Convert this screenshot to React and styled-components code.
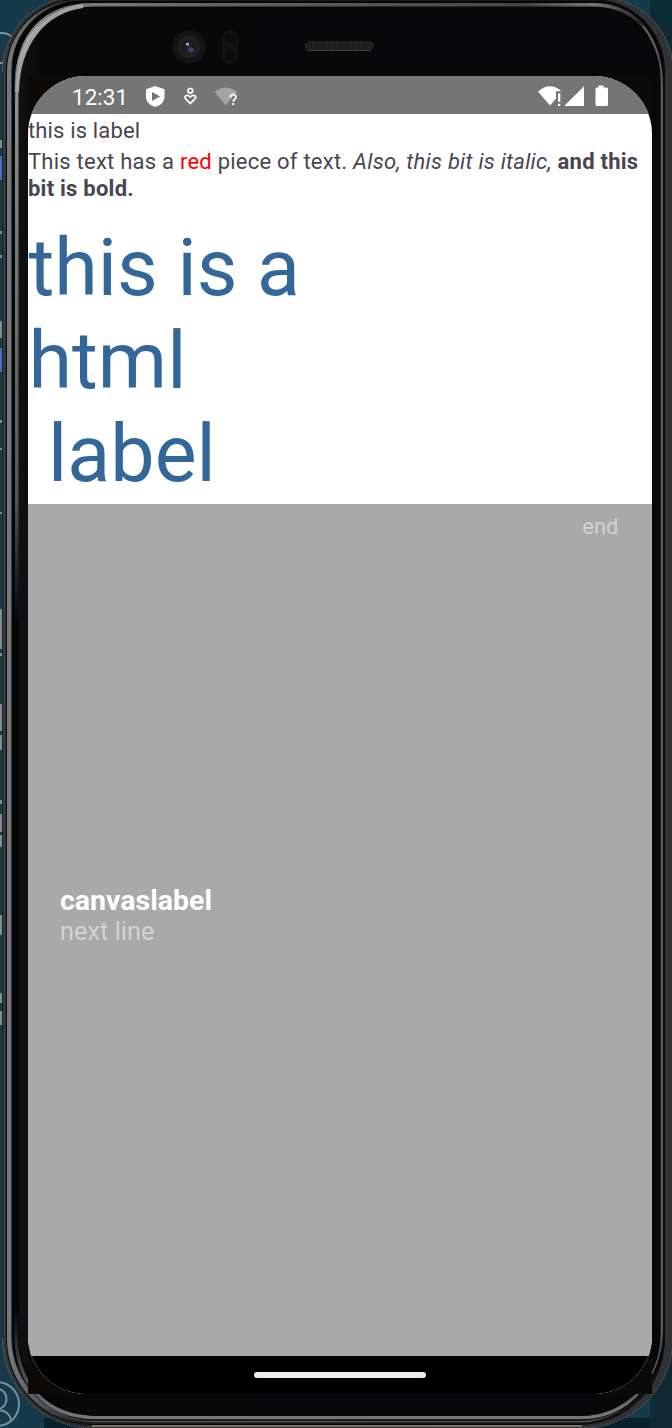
import React from "react";
import styled, { createGlobalStyle } from "styled-components";

const Global = createGlobalStyle`
  * { box-sizing: border-box; }
  body { margin: 0; background: #163a49; font-family: Roboto, sans-serif; }
`;

const Stage = styled.main`
  position: relative;
  width: 672px;
  height: 1428px;
  padding: 76px 20px 34px 28px;
  overflow: hidden;
`;

const Shell = styled.svg`
  position: absolute;
  inset: 0;
`;

const Screen = styled.section`
  position: relative;
  display: flex;
  flex-direction: column;
  height: 1318px;
  border-radius: 58px;
  overflow: hidden;
  background: #fff;
`;

const StatusBar = styled.header`
  display: flex;
  justify-content: space-between;
  height: 38px;
  flex: none;
  background: #757575;
  color: #fff;
`;

const Clock = styled.span`
  width: 73px;
  font-size: 22.5px;
  line-height: 43px;
`;

const StatusLeft = styled.div`
  display: flex;
  padding-left: 44px;
`;

const Labels = styled.div`
  height: 390px;
  flex: none;
  color: #49454f;
`;

const Label = styled.p`
  margin: 0;
  white-space: nowrap;
  font-size: 22px;
  line-height: ${(p) => p.$line}px;
  letter-spacing: ${(p) => p.$track}px;
  padding-top: ${(p) => p.$top}px;
`;

const Red = styled.span`
  color: #f00;
`;

const Heading = styled.div`
  padding: 20px 0 0 0.5px;
  color: #336699;
  font-size: 79px;
  line-height: 93px;
  white-space: pre;
`;

const Canvas = styled.div`
  flex: 1;
  display: flex;
  flex-direction: column;
  background: #a9a9a9;
  color: #d3d3d3;
`;

const EndText = styled.span`
  align-self: flex-end;
  margin: 10px 33.5px 0 0;
  font-size: 22px;
  line-height: 26px;
`;

const CanvasLabel = styled.div`
  margin: 344px 0 0 32px;
  font-size: 25.4px;
  line-height: 29px;
`;

const Title = styled.strong`
  display: block;
  color: #fff;
  font-size: 28.5px;
  line-height: 33px;
`;

const NavBar = styled.footer`
  display: flex;
  justify-content: center;
  align-items: center;
  height: 38px;
  flex: none;
  background: #000;
`;

const Handle = styled.i`
  width: 172px;
  height: 6px;
  border-radius: 3px;
  background: #ececec;
`;

// Closed outline with separate radii for the top and bottom corners.
const outline = (l, t, r, b, top, bottom) =>
  `M${l + top} ${t}H${r - top}A${top} ${top} 0 0 1 ${r} ${t + top}V${b - bottom}A${bottom} ${bottom} 0 0 1 ${r - bottom} ${b}H${l + bottom}A${bottom} ${bottom} 0 0 1 ${l} ${b - bottom}V${t + top}A${top} ${top} 0 0 1 ${l + top} ${t}Z`;

function Surroundings() {
  return (
    <g>
      <rect width="672" height="1428" fill="#163a49" />
      <rect x="650" width="22" height="26" fill="#0b2b36" />
      <rect x="650" y="26" width="22" height="1402" fill="#102a34" />
      <rect x="44" y="1418" width="606" height="10" fill="#0a202b" />
      <g fill="none" stroke="#77929c" strokeWidth="2">
        <circle cx="2" cy="48" r="15" />
        <circle cx="-3" cy="1404" r="22" />
        <circle cx="-4" cy="1399" r="10.5" />
        <path d="M-3 1410Q9 1410 11 1420" />
      </g>
      <g fill="#77929c">
        {[[140, 8], [231, 3], [255, 3], [321, 17], [420, 3], [448, 2], [512, 2], [609, 40], [653, 3], [704, 27], [735, 15], [800, 4], [814, 18], [835, 12], [915, 20], [993, 10], [1011, 14]].map(([y, h]) => (
          <rect key={y} y={y} width="2" height={h} />
        ))}
      </g>
      <path d="M0 156h2v24H0zM0 348h2v24H0z" fill="#3974c4" />
    </g>
  );
}

function PhoneShell() {
  return (
    <Shell width="672" height="1428" viewBox="0 0 672 1428">
      <defs>
        <linearGradient id="outer" x1="0" x2="1">
          <stop offset="0" stopColor="#353535" />
          <stop offset=".08" stopColor="#292929" />
          <stop offset="1" stopColor="#303233" />
        </linearGradient>
        <linearGradient id="silver" x1="0" y1="0" x2="1" y2="0">
          <stop offset="0" stopColor="#777a80" />
          <stop offset=".03" stopColor="#62666a" />
          <stop offset=".11" stopColor="#1c1d1e" />
          <stop offset="1" stopColor="#141516" />
        </linearGradient>
        <linearGradient id="rim" gradientUnits="userSpaceOnUse" x1="0" y1="0" x2="0" y2="620">
          <stop offset="0" stopColor="#777" />
          <stop offset=".06" stopColor="#b4b4b4" />
          <stop offset=".16" stopColor="#909191" />
          <stop offset=".5" stopColor="#6e706d" />
          <stop offset=".8" stopColor="#555" />
          <stop offset="1" stopColor="#08080a" />
        </linearGradient>
        <linearGradient id="topRim" x1="70" x2="640" gradientUnits="userSpaceOnUse">
          <stop offset="0" stopColor="#808080" />
          <stop offset=".2" stopColor="#686868" />
          <stop offset=".8" stopColor="#444" />
          <stop offset=".92" stopColor="#777" />
          <stop offset="1" stopColor="#282828" />
        </linearGradient>
        <linearGradient id="lowerRim" x1="0" x2="0" y1="1310" y2="1416" gradientUnits="userSpaceOnUse">
          <stop offset="0" stopColor="#08080a" />
          <stop offset="1" stopColor="#777" />
        </linearGradient>
        <linearGradient id="bezel" x1="0" x2="1">
          <stop offset="0" stopColor="#111014" />
          <stop offset=".04" stopColor="#080809" />
          <stop offset="1" stopColor="#08080b" />
        </linearGradient>
        <radialGradient id="lens">
          <stop offset="0" stopColor="#25283b" />
          <stop offset=".35" stopColor="#17181c" />
          <stop offset=".58" stopColor="#222224" />
          <stop offset=".72" stopColor="#141414" />
          <stop offset="1" stopColor="#141414" />
        </radialGradient>
        <pattern id="mesh" width="3" height="3" patternUnits="userSpaceOnUse">
          <rect width="3" height="3" fill="#1b1b1b" />
          <path d="M0 0v3" stroke="#383838" />
        </pattern>
      </defs>
      <Surroundings />
      <path d={outline(2.5, -3, 673, 1428, 74, 90)} fill="url(#outer)" stroke="#777" strokeWidth="1" strokeDasharray="1 1" />
      <path d="M2.5 72V1338M92 1427.2H582" stroke="#252525" />
      <path d="M92 1426H582" stroke="#77716f" strokeWidth="2" />
      <path d={outline(6, -1, 665, 1425, 72, 86)} fill="#080809" />
      <path d={outline(7, 0, 664, 1424, 71, 85)} fill="url(#silver)" />
      <path d="M50 1407Q70 1421.5 98 1421.5H580Q600 1421.5 620 1410" fill="none" stroke="#555" strokeWidth="1.5" />
      <path d={outline(11.5, 1, 663.5, 1420.5, 69, 83)} fill="#050506" />
      <path d="M15 620V85C15 35 43 3 92 3V6.5C49 6.5 19.5 42 18.5 85V620Z" fill="url(#rim)" />
      <path d="M91 4.7H592C613 4.7 631 12 643 26" fill="none" stroke="url(#topRim)" strokeWidth="3.5" />
      <path d="M643 26Q661.7 49 661.7 86V1330C661.7 1355 652 1378 639 1392" fill="none" stroke="#5b5d5d" strokeWidth="2.5" />
      <path d="M16 1310V1334C16 1384 46 1417.5 96 1417.5H580Q616 1417.5 639 1392" fill="none" stroke="url(#lowerRim)" strokeWidth="3.5" />
      <path d={outline(19, 7, 660.5, 1416, 70, 80)} fill="url(#bezel)" />
      <path d="M15.2 100V82C16 39 43 4 92 4" fill="none" stroke="#666" strokeWidth="1" />
      <path d="M17 92C18 44 44 11 83 6" fill="none" stroke="#a2a2a2" strokeWidth="4" />
      <g fill="#0c0a08">
        <path d="M28 76h62v62H28zM590 76h62v62h-62zM28 1332h62v62H28zM590 1332h62v62h-62z" />
      </g>
      <circle cx="189" cy="47" r="16.5" fill="url(#lens)" />
      <ellipse cx="191" cy="50" rx="3" ry="2.5" fill="#39406a" />
      <circle cx="187.5" cy="44" r="1.6" fill="#aeb0b5" />
      <rect x="222" y="30" width="16" height="34" rx="8" fill="#111112" />
      <circle cx="230" cy="38" r="6" fill="#0c0c0d" stroke="#151515" />
      <circle cx="230" cy="56" r="6" fill="#0c0c0d" stroke="#151515" />
      <rect x="305" y="41.5" width="68.5" height="9" rx="4.5" fill="url(#mesh)" stroke="#202020" />
      <path d="M308 50.5H371" stroke="#3d3d3d" />
    </Shell>
  );
}

function NotificationIcons() {
  return (
    <svg width="110" height="38" viewBox="145 76 110 38">
      <path d="M155.2 86L164.5 89.2V96.5C164.5 102 160.5 105.5 155.2 107C150 105.5 146 102 146 96.5V89.2Z" fill="#fff" />
      <path d="M152 92v9l8.2-4.5z" fill="#757575" />
      <g fill="none" stroke="#fff" strokeWidth="1.7">
        <circle cx="190.3" cy="90.8" r="2.3" />
        <path d="M190.3 103.3L185.6 98.8C183.4 96.4 187 93.6 190.3 97C193.7 93.6 197.2 96.4 195 98.8Z" />
      </g>
      <path d="M214.5 92Q225.5 83 237 92L225.8 105.2Z" fill="#a3a3a3" />
      <path d="M228 93h10v13h-10z" fill="#757575" />
      <path d="M228 93h8l-8 9.5z" fill="#a3a3a3" />
      <path d="M230.5 97.5C230.5 93.5 236 93.6 236 97C236 99.3 233.2 99.2 233.2 101.8" fill="none" stroke="#fff" strokeWidth="1.8" />
      <rect x="232.2" y="103" width="2" height="2" fill="#fff" />
    </svg>
  );
}

function SystemIcons() {
  return (
    <svg width="114" height="38" viewBox="538 76 114 38">
      <path d="M538 91.5Q550 81 561.5 91.2H556V98.5L550 105.5Z" fill="#fff" />
      <path d="M558 93.5h2.3v8.2H558zM558 103.7h2.3v2.3H558zM584 86.3V106H564.2zM598.5 85.5h5v2h3q1.5 0 1.5 1.5v15.5q0 1.5-1.5 1.5h-9.5q-1.5 0-1.5-1.5V89q0-1.5 1.5-1.5h1.5z" fill="#fff" />
    </svg>
  );
}

export default function App() {
  return (
    <>
      <Global />
      <Stage>
        <PhoneShell />
        <Screen>
          <StatusBar>
            <StatusLeft>
              <Clock>12:31</Clock>
              <NotificationIcons />
            </StatusLeft>
            <SystemIcons />
          </StatusBar>
          <Labels>
            <Label $line={26} $top={4} $track={0.15}>this is label</Label>
            <Label $line={26.5} $top={5} $track={0.235}>
              This text has a <Red>red</Red> piece of text. <em>Also, this bit is italic,</em> <b>and this<br />bit is bold.</b>
            </Label>
            <Heading>{"this is a\nhtml\n label"}</Heading>
          </Labels>
          <Canvas>
            <EndText>end</EndText>
            <CanvasLabel>
              <Title>canvaslabel</Title>
              next line
            </CanvasLabel>
          </Canvas>
          <NavBar><Handle /></NavBar>
        </Screen>
      </Stage>
    </>
  );
}
